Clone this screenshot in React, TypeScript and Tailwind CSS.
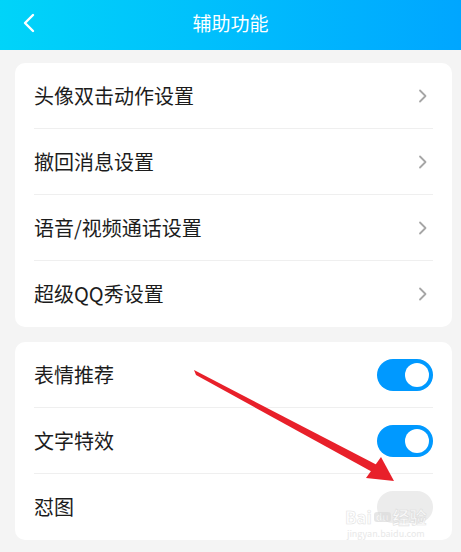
import React from "react"

const font = { fontFamily: '"Noto Sans CJK SC", "Noto Sans", sans-serif' }

const linkRows = ["头像双击动作设置", "撤回消息设置", "语音/视频通话设置", "超级QQ秀设置"]
const switchRows = [
  { label: "表情推荐", on: true },
  { label: "文字特效", on: true },
  { label: "怼图", on: false },
]

function Chevron() {
  return (
    <svg width="10" height="14" viewBox="0 0 10 14" fill="none">
      <path d="M2 1.5 L7.5 7 L2 12.5" stroke="#a6a6a6" strokeWidth="1.8" strokeLinecap="round" strokeLinejoin="round" />
    </svg>
  )
}

function Toggle({ on }: { on: boolean }) {
  return (
    <div className={`w-[56px] h-[32px] rounded-full flex items-center px-[4px] ${on ? "bg-[#0099ff] justify-end" : "bg-[#ececec] justify-start"}`}>
      {on && <div className="w-[24px] h-[24px] rounded-full bg-white" />}
    </div>
  )
}

export default function App() {
  return (
    <div className="relative w-[461px] h-[552px] bg-[#f4f4f4] overflow-hidden" style={font}>
      {/* Header */}
      <div className="h-[50px] bg-gradient-to-r from-[#00d4f9] to-[#00a6ff] flex items-center justify-center relative">
        <svg className="absolute left-[22px] top-[13px]" width="14" height="20" viewBox="0 0 14 20" fill="none">
          <path d="M11 2 L3 10 L11 18" stroke="white" strokeWidth="2.4" strokeLinecap="round" strokeLinejoin="round" />
        </svg>
        <span className="text-white text-[19px] leading-none -mt-[6px]">辅助功能</span>
      </div>

      <div className="pl-[15px] pr-[9px] pt-[13px] flex flex-col gap-[15px]">
        {/* Card 1 */}
        <div className="bg-white rounded-[10px] px-[19px]">
          {linkRows.map((label, i) => (
            <div
              key={label}
              className={`h-[66px] flex items-center justify-between pr-[5px] ${i < linkRows.length - 1 ? "border-b border-[#efefef]" : ""}`}
            >
              <span className="text-[20px] text-[#1c1c1c]">{label}</span>
              <Chevron />
            </div>
          ))}
        </div>

        {/* Card 2 */}
        <div className="bg-white rounded-[10px] px-[19px]">
          {switchRows.map((r, i) => (
            <div
              key={r.label}
              className={`h-[66px] flex items-center justify-between ${i < switchRows.length - 1 ? "border-b border-[#efefef]" : ""}`}
            >
              <span className="text-[20px] text-[#1c1c1c]">{r.label}</span>
              <Toggle on={r.on} />
            </div>
          ))}
        </div>
      </div>

      {/* Red annotation arrow */}
      <svg className="absolute left-0 top-0 pointer-events-none" width="461" height="552" viewBox="0 0 461 552">
        <polygon points="194,370 196,375 376,474 379,466" fill="#e8202a" />
        <polygon points="394,481 366,478 381,457" fill="#e8202a" />
      </svg>

      {/* Watermark */}
      <div className="absolute left-[345px] top-[508px] flex flex-col items-center leading-none opacity-70 pointer-events-none">
        <div className="flex items-center text-[17px] font-bold text-white" style={{ WebkitTextStroke: "0.6px #d6d6d6" }}>
          <span>Bai</span>
          <span className="mx-[2px] px-[2px] text-[10px] bg-[#dcdcdc] rounded-[3px]">du</span>
          <span>经验</span>
        </div>
        <span className="text-[9px] text-[#dedede] mt-[4px]">jingyan.baidu.com</span>
      </div>
    </div>
  )
}
